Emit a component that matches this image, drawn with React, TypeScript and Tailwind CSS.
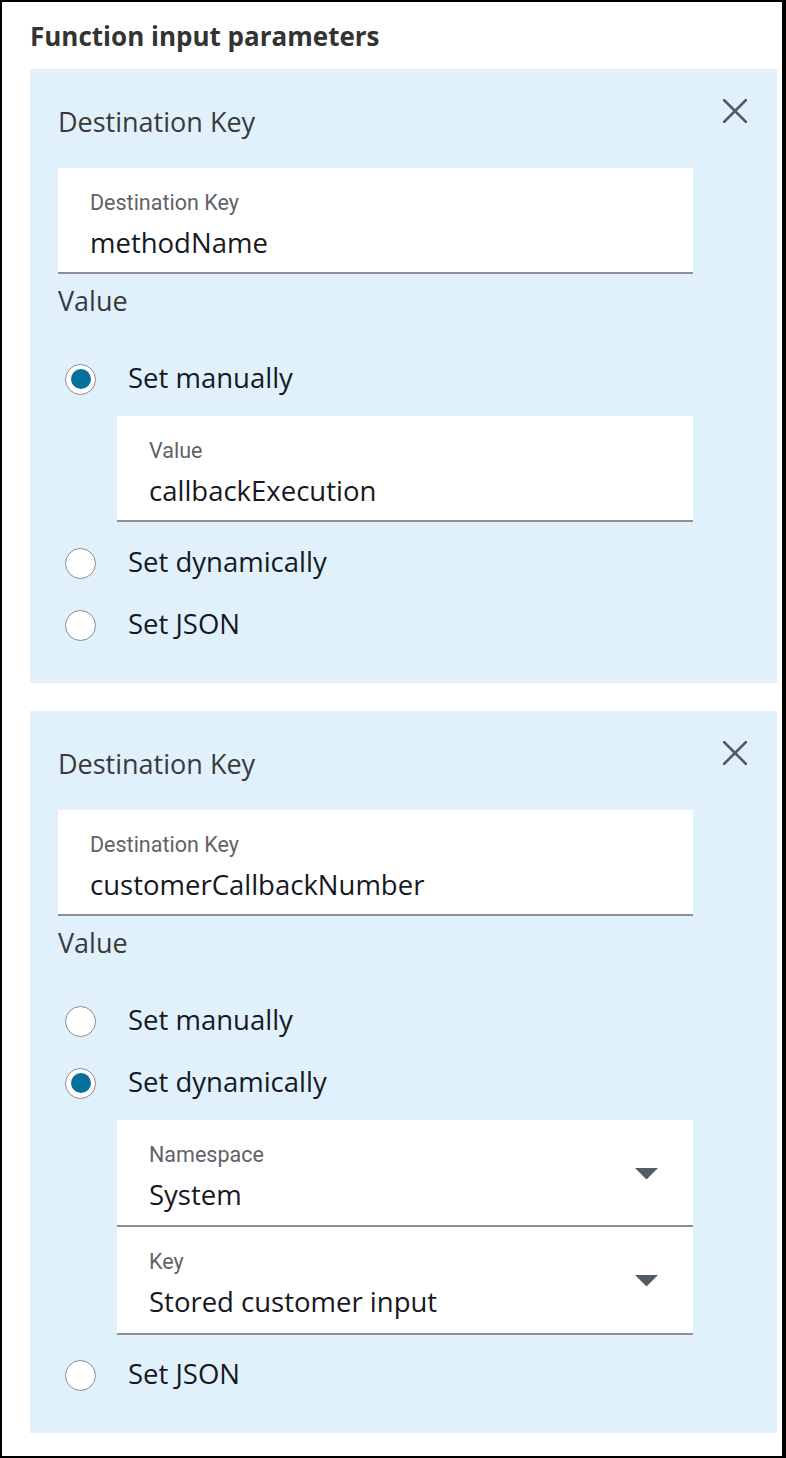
import { ReactNode } from "react";

type Choice = "manual" | "dynamic" | "json";

interface Param {
  destKey: string;
  choice: Choice;
}

const params: Param[] = [
  { destKey: "methodName", choice: "manual" },
  { destKey: "customerCallbackNumber", choice: "dynamic" },
];

const sans = "font-['Open_Sans',sans-serif]";
const roboto = "font-['Roboto',sans-serif]";

function CloseIcon() {
  return (
    <svg width="24" height="24" viewBox="0 0 24 24" className="shrink-0">
      <path d="M1 1L23 23M23 1L1 23" stroke="#545b64" strokeWidth="2.6" strokeLinecap="round" />
    </svg>
  );
}

function Caret() {
  return (
    <svg width="23" height="12" viewBox="0 0 23 12" className="shrink-0">
      <path d="M0 0H23L11.5 11.5Z" fill="#545b64" />
    </svg>
  );
}

function Radio({ checked }: { checked: boolean }) {
  return (
    <span className="flex h-[31px] w-[31px] shrink-0 items-center justify-center rounded-full border border-[#8c8c8c] bg-white">
      {checked && <span className="h-[20px] w-[20px] rounded-full bg-[#08719a]" />}
    </span>
  );
}

function Field({
  label,
  value,
  select,
  className,
}: {
  label: string;
  value: string;
  select?: boolean;
  className?: string;
}) {
  return (
    <div
      className={`flex items-start justify-between border-b-2 border-[#8d8f93] bg-white pl-[32px] pr-[35px] pt-[22px] ${className ?? ""}`}
    >
      <div>
        <div className={`${roboto} text-[21.5px] leading-[26px] text-[#5f6368]`}>{label}</div>
        <div className={`${sans} mt-[10px] text-[27.5px] leading-[34px] text-[#16191f]`}>{value}</div>
      </div>
      {select && (
        <div className="mt-[26px]">
          <Caret />
        </div>
      )}
    </div>
  );
}

function RadioRow({ checked, label }: { checked: boolean; label: string }) {
  return (
    <div className="flex h-[62px] items-center gap-[32px] pl-[7px]">
      <Radio checked={checked} />
      <span className={`${sans} mb-[2px] text-[27.5px] leading-[34px] text-[#16191f]`}>{label}</span>
    </div>
  );
}

function Nested({ children }: { children: ReactNode }) {
  return <div className="ml-[59px] mr-[54px]">{children}</div>;
}

function ParamPanel({ param }: { param: Param }) {
  return (
    <div className="bg-[#e1f1fb] pb-[27px] pl-[28px] pr-[30px] pt-[30px]">
      <div className="flex items-start justify-between">
        <h3 className={`${sans} mt-[6px] text-[27px] leading-[34px] text-[#3a3a3a]`}>Destination Key</h3>
        <CloseIcon />
      </div>

      <Field className="mr-[54px] mt-[29px] h-[106px]" label="Destination Key" value={param.destKey} />

      <div className={`${sans} mt-[10px] text-[27px] leading-[34px] text-[#3a3a3a]`}>Value</div>

      <div className="mt-[30px]">
        <RadioRow checked={param.choice === "manual"} label="Set manually" />
        {param.choice === "manual" && (
          <Nested>
            <div className="mb-[10px] mt-[6px]">
              <Field className="h-[106px]" label="Value" value="callbackExecution" />
            </div>
          </Nested>
        )}
        <RadioRow checked={param.choice === "dynamic"} label="Set dynamically" />
        {param.choice === "dynamic" && (
          <Nested>
            <div className="mb-[9px] mt-[6px]">
              <Field className="h-[107px]" label="Namespace" value="System" select />
              <Field className="h-[108px]" label="Key" value="Stored customer input" select />
            </div>
          </Nested>
        )}
        <RadioRow checked={param.choice === "json"} label="Set JSON" />
      </div>
    </div>
  );
}

export default function App() {
  return (
    <div className="h-[1458px] w-[786px] border-b-2 border-l-2 border-r-4 border-t-2 border-black bg-white pl-[28px] pr-[5px] pt-[18px]">
      <h2 className={`${sans} text-[26px] font-bold leading-[32px] text-[#333333]`}>Function input parameters</h2>
      <div className="mt-[17px] flex flex-col gap-[28px]">
        {params.map((p, i) => (
          <ParamPanel key={i} param={p} />
        ))}
      </div>
    </div>
  );
}
